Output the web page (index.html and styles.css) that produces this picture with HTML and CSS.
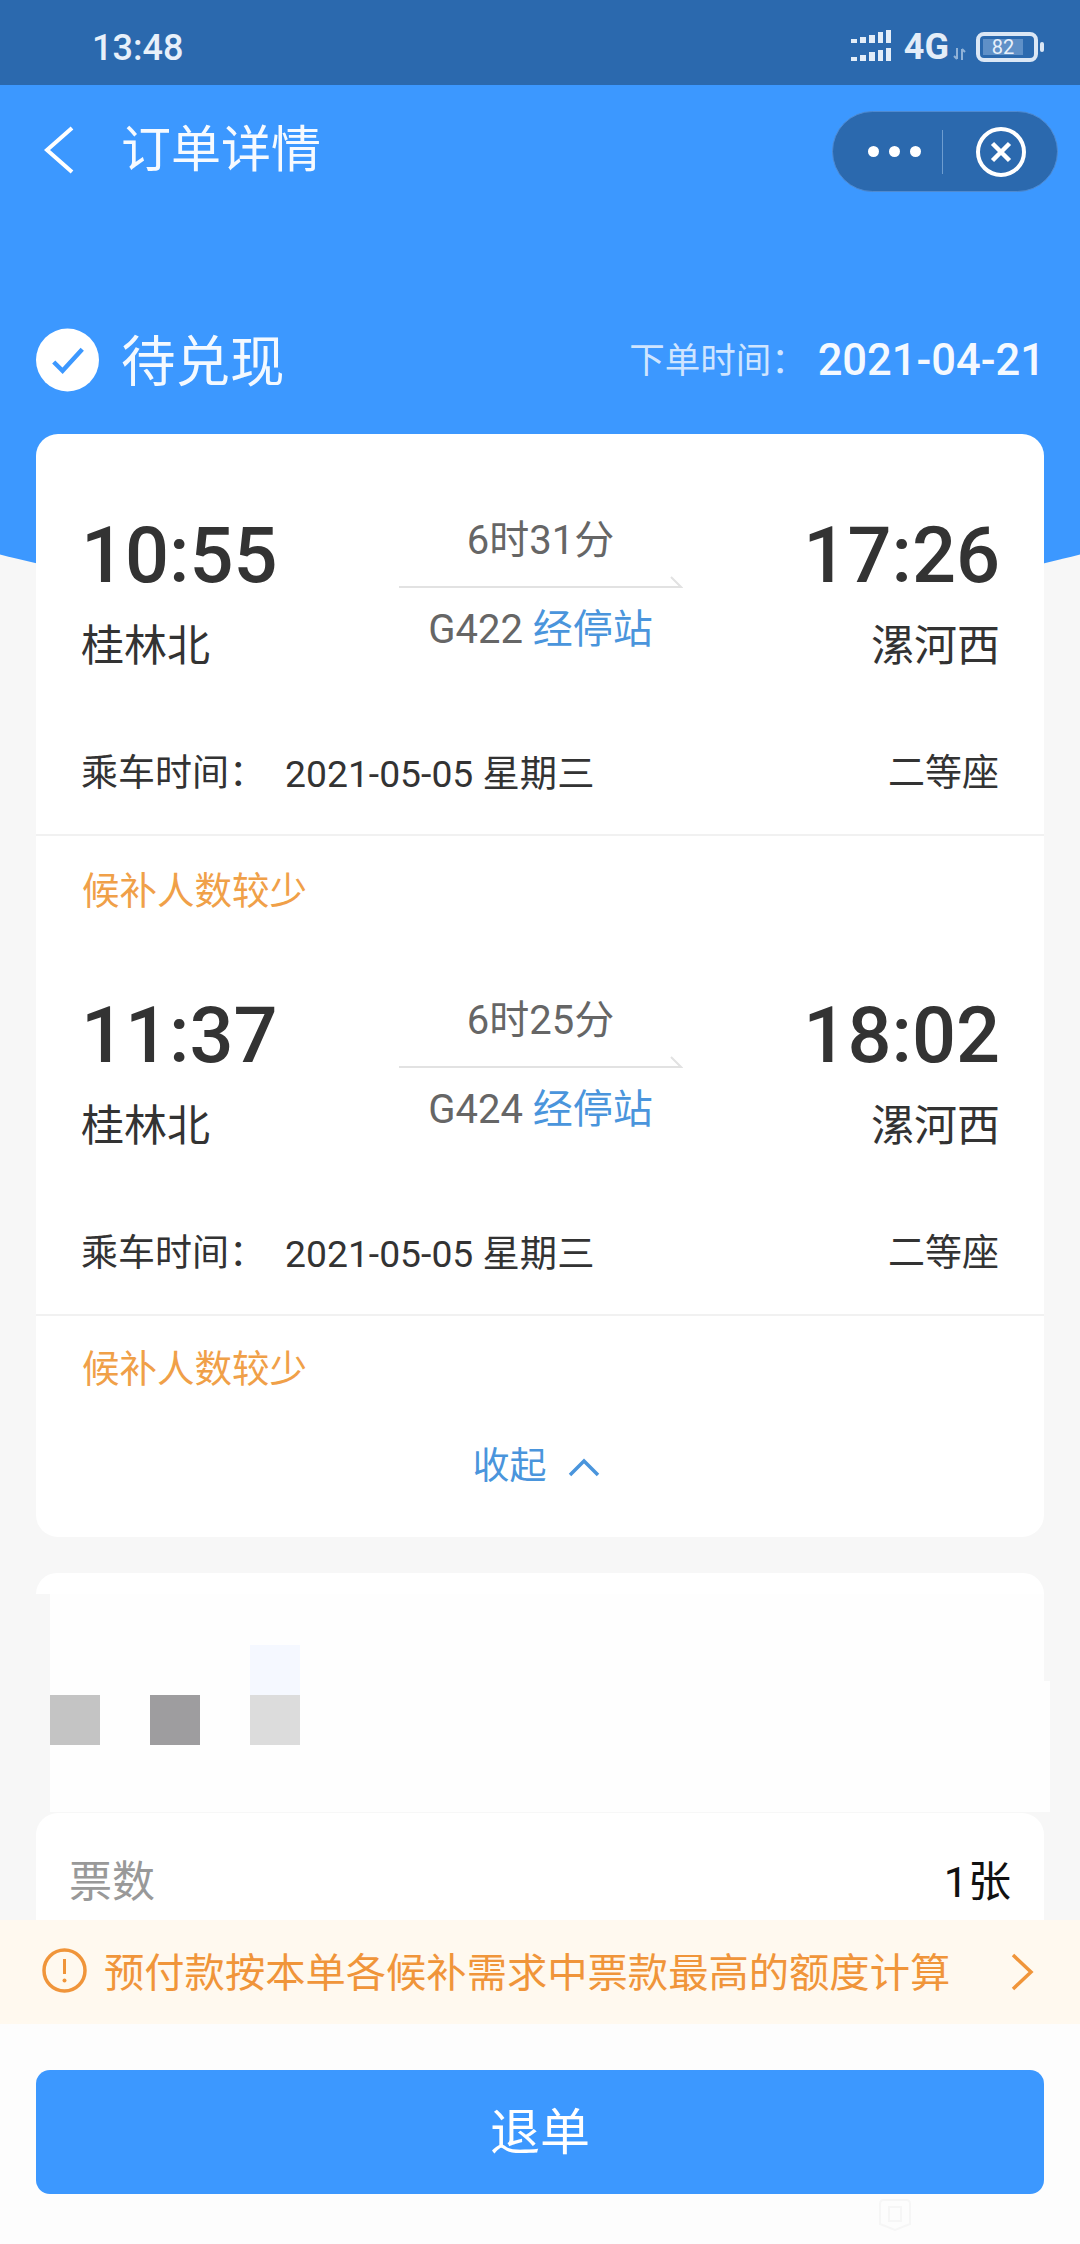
FILE: index.html
```html
<!DOCTYPE html>
<html lang="zh">
<head>
    <meta charset="UTF-8">
    <meta name="viewport" content="width=device-width, initial-scale=1.0">
    <title>订单详情</title>
    <link rel="stylesheet" href="styles.css">
</head>
<body>

<div class="page">
    <div class="top">
        <div class="statusbar">
            <span class="clock">13:48</span>
            <div class="status-icons">
                <svg class="signal" width="40" height="31" viewBox="0 0 40 31">
                    <g fill="#e3edf8">
                        <rect x="0" y="9" width="6" height="4"/><rect x="9" y="7" width="6" height="6"/><rect x="18" y="5" width="6" height="8"/><rect x="27" y="2" width="5" height="11"/><rect x="35" y="0" width="5" height="13"/>
                        <rect x="0" y="27" width="6" height="4"/><rect x="9" y="25" width="6" height="6"/><rect x="18" y="22" width="6" height="9"/><rect x="27" y="20" width="5" height="11"/><rect x="35" y="18" width="5" height="13"/>
                    </g>
                </svg>
                <span class="net">4G</span>
                <svg class="arrows" width="13" height="12" viewBox="0 0 13 12">
                    <path d="M4 0v11M1 8l3 3M9 12V1M9 1l3 3" stroke="#8fb2d8" stroke-width="2" fill="none"/>
                </svg>
                <div class="battery"><span class="battery-level">82</span></div>
                <span class="battery-nub"></span>
            </div>
        </div>

        <div class="nav">
            <svg class="back" width="30" height="48" viewBox="0 0 30 48">
                <path d="M28 2L3 24l25 22" stroke="#fff" stroke-width="4" fill="none"/>
            </svg>
            <span class="nav-title">订单详情</span>
            <div class="capsule">
                <div class="capsule-dots"><i></i><i></i><i></i></div>
                <span class="capsule-line"></span>
                <svg width="54" height="54" viewBox="0 0 54 54">
                    <circle cx="27" cy="27" r="23" stroke="#fff" stroke-width="4" fill="none"/>
                    <path d="M18.5 18.5l17 17M35.5 18.5l-17 17" stroke="#fff" stroke-width="4.5" fill="none"/>
                </svg>
            </div>
        </div>

        <div class="order-state">
            <svg width="63" height="64" viewBox="0 0 64 64">
                <circle cx="32" cy="32" r="32" fill="#fff"/>
                <path d="M18 34l9 9 20-22" stroke="#3c98ff" stroke-width="4.5" fill="none"/>
            </svg>
            <span class="state-name">待兑现</span>
            <span class="order-label">下单时间：</span>
            <span class="order-date">2021-04-21</span>
        </div>
    </div>

    <div class="card trains">
        <div class="segment">
            <div class="train">
                <div class="end">
                    <div class="time">10:55</div>
                    <div class="station">桂林北</div>
                </div>
                <div class="middle">
                    <div class="duration">6时31分</div>
                    <svg class="route" width="284" height="13" viewBox="0 0 284 13">
                        <path d="M0 11h282L272 1" stroke="#e2e2e2" stroke-width="2" fill="none"/>
                    </svg>
                    <div class="train-no">G422 <span class="link">经停站</span></div>
                </div>
                <div class="end right">
                    <div class="time">17:26</div>
                    <div class="station">漯河西</div>
                </div>
            </div>
            <div class="ride">
                <span class="ride-label">乘车时间：</span>
                <span class="ride-date">2021-05-05 星期三</span>
                <span class="seat">二等座</span>
            </div>
            <div class="tip">候补人数较少</div>
        </div>

        <div class="segment">
            <div class="train">
                <div class="end">
                    <div class="time">11:37</div>
                    <div class="station">桂林北</div>
                </div>
                <div class="middle">
                    <div class="duration">6时25分</div>
                    <svg class="route" width="284" height="13" viewBox="0 0 284 13">
                        <path d="M0 11h282L272 1" stroke="#e2e2e2" stroke-width="2" fill="none"/>
                    </svg>
                    <div class="train-no">G424 <span class="link">经停站</span></div>
                </div>
                <div class="end right">
                    <div class="time">18:02</div>
                    <div class="station">漯河西</div>
                </div>
            </div>
            <div class="ride">
                <span class="ride-label">乘车时间：</span>
                <span class="ride-date">2021-05-05 星期三</span>
                <span class="seat">二等座</span>
            </div>
            <div class="tip tip-last">候补人数较少</div>
        </div>

        <div class="fold">
            <span class="link">收起</span>
            <svg width="32" height="19" viewBox="0 0 32 19">
                <path d="M2 17L16 3l14 14" stroke="#4a95dc" stroke-width="3.5" fill="none"/>
            </svg>
        </div>
    </div>

    <div class="hidden-top"></div>
    <div class="hidden-body">
        <div class="mosaic">
            <div class="tile tile-a"></div>
            <div class="tile tile-b"></div>
            <div class="tile tile-c"></div>
            <div class="tile tile-d"></div>
        </div>
    </div>

    <div class="card tickets">
        <span class="tickets-label">票数</span>
        <span class="tickets-value">1张</span>
    </div>
</div>

<div class="notice">
    <svg class="notice-icon" width="45" height="45" viewBox="0 0 45 45">
        <circle cx="22.5" cy="22.5" r="20.5" stroke="#f0953a" stroke-width="3.5" fill="none"/>
        <path d="M22.5 11v15" stroke="#f0953a" stroke-width="3" fill="none"/>
        <circle cx="22.5" cy="32.5" r="2" fill="#f0953a"/>
    </svg>
    <span class="notice-text">预付款按本单各候补需求中票款最高的额度计算</span>
    <svg class="notice-arrow" width="24" height="38" viewBox="0 0 24 38">
        <path d="M3 2l18 17L3 36" stroke="#f0953a" stroke-width="3.5" fill="none"/>
    </svg>
</div>

<div class="footer">
    <div class="refund">退单</div>
    <svg class="mark" width="34" height="34" viewBox="0 0 34 34">
        <path d="M2 6q0-4 4-4h22q4 0 4 4v20l-15 6-15-6z" stroke="#f6f6f6" stroke-width="2" fill="none"/>
        <rect x="11" y="9" width="12" height="14" stroke="#f6f6f6" stroke-width="2" fill="none"/>
    </svg>
</div>

</body>
</html>
```

FILE: styles.css
```css
body {
    font-family: Roboto, "Noto Sans CJK SC", sans-serif;
    background-color: #f7f7f7;
    color: #333;
    margin: 0;
    width: 1080px;
    height: 2244px;
    overflow: hidden;
    display: flex;
    flex-direction: column;
}
.page {
    height: 1920px;
    overflow: hidden;
}

/* blue header */
.top {
    height: 623px;
    background: #3c98ff;
    clip-path: circle(2160px at 540px -1537px);
}
.statusbar {
    height: 85px;
    box-sizing: border-box;
    background: #2b69ae;
    display: flex;
    align-items: center;
    justify-content: space-between;
    padding: 8px 36px 0 92px;
}
.clock {
    font-size: 36px;
    font-weight: 500;
    color: #e8f0fa;
    margin-top: 2px;
}
.status-icons {
    display: flex;
    align-items: center;
}
.signal {
    margin-top: -2px;
}
.net {
    font-size: 36px;
    font-weight: 700;
    line-height: 40px;
    color: #e3edf8;
    margin-left: 13px;
}
.arrows {
    margin: 14px 10px 0 4px;
}
.battery {
    width: 62px;
    height: 30px;
    box-sizing: border-box;
    border: 4px solid #dbe7f5;
    border-radius: 8px;
    padding: 3px;
}
.battery-level {
    display: block;
    width: 40px;
    height: 16px;
    background: #5f90c7;
    font-size: 20px;
    line-height: 16px;
    text-align: center;
    color: #e8f0fa;
}
.battery-nub {
    width: 4px;
    height: 10px;
    margin-left: 2px;
    border-radius: 2px;
    background: #dbe7f5;
}
.nav {
    height: 80px;
    margin-top: 27px;
    padding: 0 22px 0 44px;
    display: flex;
    align-items: center;
}
.back {
    margin-top: -4px;
}
.nav-title {
    font-size: 50px;
    line-height: 60px;
    color: #f6faff;
    margin: -4px 0 0 47px;
}
.capsule {
    margin-left: auto;
    width: 226px;
    height: 81px;
    margin-top: -1px;
    box-sizing: border-box;
    border: 1px solid #4f8ad0;
    border-radius: 41px;
    background: #2b69ae;
    display: flex;
    align-items: center;
    padding-left: 35px;
}
.capsule-dots {
    display: flex;
    gap: 10px;
}
.capsule-dots i {
    width: 11px;
    height: 11px;
    border-radius: 50%;
    background: #fff;
}
.capsule-line {
    width: 1px;
    height: 44px;
    background: #6e9dd0;
    margin: 0 31px 0 21px;
}
.order-state {
    height: 64px;
    margin-top: 136px;
    padding: 0 35px 0 36px;
    display: flex;
    align-items: center;
}
.state-name {
    font-size: 54.5px;
    line-height: 64px;
    color: #f4f9ff;
    margin: 4px 0 0 22px;
}
.order-label {
    font-size: 35.5px;
    color: #cfe5ff;
    margin: 0 0 5px auto;
}
.order-date {
    font-size: 43.5px;
    font-weight: 500;
    color: #f4f9ff;
    margin-left: 11px;
}

/* cards */
.card {
    background: #fff;
    border-radius: 22px;
    margin: 0 36px;
}
.trains {
    position: relative;
    margin-top: -189px;
    padding: 2px 0 45px;
}
.segment {
    padding-top: 80px;
}
.train {
    padding: 0 44px 0 45px;
    display: flex;
    justify-content: space-between;
}
.end {
    width: 220px;
}
.end.right {
    text-align: right;
}
.time {
    font-size: 77.5px;
    font-weight: 500;
    line-height: 80px;
}
.station {
    font-size: 43px;
    line-height: 50px;
    margin-top: 25px;
}
.middle {
    width: 284px;
    text-align: center;
    color: #666;
    font-size: 40px;
    line-height: 50px;
}
.route {
    display: block;
    margin-top: 10px;
}
.train-no {
    margin-top: 16px;
}
.link {
    color: #4a95dc;
}
.ride {
    margin-top: 78px;
    padding: 0 45px 35px;
    display: flex;
    font-size: 37px;
    line-height: 50px;
    border-bottom: 2px solid #f1f1f1;
}
.ride-label {
    width: 204px;
}
.ride-date {
    font-size: 37.3px;
}
.seat {
    margin-left: auto;
}
.tip {
    margin-top: 30px;
    padding: 0 46px;
    font-size: 37.5px;
    line-height: 50px;
    color: #f0a048;
}
.tip-last {
    margin-top: 28px;
}
.fold {
    margin-top: 48px;
    padding-right: 8px;
    display: flex;
    justify-content: center;
    align-items: center;
    gap: 21px;
    font-size: 37px;
    line-height: 50px;
}

/* redacted block */
.hidden-top {
    height: 21px;
    margin: 36px 36px 0;
    background: #fff;
    border-radius: 22px 22px 0 0;
}
.hidden-body {
    height: 218px;
    margin-left: 50px;
    width: 1000px;
    background:
        linear-gradient(#fefefe, #fefefe) 0 0 / 994px 100% no-repeat,
        linear-gradient(#fefefe, #fefefe) 0 87px / 1000px 100% no-repeat;
}
.mosaic {
    display: grid;
    grid-template-columns: 50px 50px 50px;
    grid-template-rows: 50px 50px;
    column-gap: 50px;
    padding-top: 51px;
}
.tile-a {
    grid-column: 1;
    grid-row: 2;
    background: #c4c4c4;
}
.tile-b {
    grid-column: 2;
    grid-row: 2;
    background: #9e9d9f;
}
.tile-c {
    grid-column: 3;
    grid-row: 2;
    background: #dcdcdc;
}
.tile-d {
    grid-column: 3;
    grid-row: 1;
    background: #f5f8ff;
}
.tickets {
    margin-top: 1px;
    height: 120px;
    padding: 44px 33px 0;
    display: flex;
    justify-content: space-between;
    font-size: 43px;
    line-height: 50px;
}
.tickets-label {
    color: #999;
}
.tickets-value {
    color: #111;
}

/* bottom bar */
.notice {
    height: 104px;
    flex: none;
    background: #fff9ef;
    padding: 0 46px 0 42px;
    display: flex;
    align-items: center;
}
.notice-icon {
    margin-bottom: 4px;
}
.notice-text {
    font-size: 40.3px;
    color: #f0953a;
    margin: 0 0 6px 17px;
}
.notice-arrow {
    margin-left: auto;
}
.footer {
    flex: 1;
    background: #fdfdfd;
    padding: 46px 36px 0;
}
.refund {
    height: 124px;
    line-height: 126px;
    border-radius: 14px;
    background: #3c98ff;
    color: #fff;
    font-size: 50px;
    text-align: center;
}
.mark {
    display: block;
    margin: 4px 0 0 842px;
}
```
